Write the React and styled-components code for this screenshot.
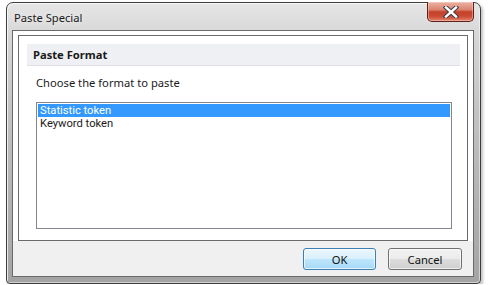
import React from "react";
import styled, { createGlobalStyle } from "styled-components";

const Global = createGlobalStyle`
  html, body { margin: 0; padding: 0; background: #ffffff; }
  body { font-family: "Noto Sans", "Open Sans", sans-serif; }
`;

const Window = styled.div`
  box-sizing: border-box;
  margin: 2px 0 0 6px;
  width: 475px;
  height: 282px;
  border: 1px solid #3d3d3d;
  border-radius: 7px 7px 4px 4px;
  background: linear-gradient(to bottom, #e6e6e6 0%, #d6d6d6 12%, #c2c2c2 40%, #b0b0b0 75%, #a4a4a4 100%);
  box-shadow: inset 1px 1px 0 rgba(255,255,255,0.75), inset -1px -1px 0 rgba(255,255,255,0.5), 2px 2px 3px rgba(0,0,0,0.25);
  padding: 0 6px 6px 5px;
  display: flex;
  flex-direction: column;
`;

const TitleBar = styled.div`
  height: 27px;
  display: flex;
  align-items: flex-start;
  flex-shrink: 0;
`;

const Title = styled.div`
  font-family: "Noto Sans", "Open Sans", sans-serif;
  font-size: 11.2px;
  color: #1a1a1a;
  margin: 7px 0 0 2px;
  text-shadow: 0 0 6px rgba(255,255,255,0.9);
`;

const CloseButton = styled.div`
  box-sizing: border-box;
  margin-left: auto;
  margin-top: -1px;
  width: 47px;
  height: 20px;
  border: 1px solid #5e2018;
  border-top: none;
  border-radius: 0 0 5px 5px;
  background: linear-gradient(to bottom, #eab3a3 0%, #dc8570 40%, #c4412a 52%, #cc4a32 75%, #e0846c 100%);
  box-shadow: inset 0 0 0 1px rgba(255,220,210,0.45);
  display: flex;
  align-items: center;
  justify-content: center;
`;

const Client = styled.div`
  flex: 1;
  box-sizing: border-box;
  border: 1px solid #6a6a6a;
  background: #f0f0f0;
  display: flex;
  flex-direction: column;
`;

const WhiteArea = styled.div`
  background: #ffffff;
  padding: 4px 5px 0 5px;
  height: 210px;
  box-sizing: border-box;
  display: flex;
`;

const Panel = styled.div`
  flex: 1;
  box-sizing: border-box;
  border: 1px solid #6a6a6a;
  padding: 8px 7px 0 8px;
  display: flex;
  flex-direction: column;
`;

const PanelHeader = styled.div`
  height: 21px;
  background: #eff0f4;
  border-bottom: 1px solid #dfe0e6;
  display: flex;
  align-items: center;
  padding-left: 6px;
  font-size: 11.2px;
  font-weight: 700;
  color: #1a1a1a;
`;

const Prompt = styled.div`
  font-size: 11.2px;
  color: #1a1a1a;
  margin: 9px 0 0 9px;
  line-height: 16px;
`;

const ListBox = styled.div`
  box-sizing: border-box;
  margin: 11px 0 0 9px;
  width: 416px;
  height: 127px;
  border: 1px solid #828790;
  padding: 1px;
  background: #ffffff;
`;

const ListItem = styled.div`
  height: 13px;
  line-height: 13px;
  font-family: Roboto, "Noto Sans", sans-serif;
  font-size: 11.2px;
  padding-left: 2px;
  overflow: hidden;
  color: ${(p) => (p.$selected ? "#ffffff" : "#1a1a1a")};
  background: ${(p) => (p.$selected ? "#3399ff" : "transparent")};
  white-space: nowrap;
`;

const ButtonBar = styled.div`
  flex: 1;
  display: flex;
  justify-content: flex-end;
  align-items: flex-start;
  gap: 12px;
  padding: 7px 11px 0 0;
`;

const Button = styled.div`
  box-sizing: border-box;
  width: ${(p) => p.$w}px;
  height: 22px;
  border-radius: 3px;
  border: 1px solid ${(p) => (p.$default ? "#3c7fb1" : "#707070")};
  background: ${(p) =>
    p.$default
      ? "linear-gradient(to bottom, #eaf6fd 0%, #d9f0fc 50%, #bee6fd 50%, #a7d9f5 100%)"
      : "linear-gradient(to bottom, #f2f2f2 0%, #ebebeb 50%, #dddddd 50%, #cfcfcf 100%)"};
  box-shadow: inset 0 0 0 1px rgba(255,255,255,0.65);
  display: flex;
  align-items: center;
  justify-content: center;
  font-size: 11.2px;
  color: #111;
`;

export default function App() {
  return (
    <>
      <Global />
      <Window>
        <TitleBar>
          <Title>Paste Special</Title>
          <CloseButton>
            <svg width="16" height="12" viewBox="0 0 16 12">
              <path d="M3 1.5 L13 10.5 M13 1.5 L3 10.5" stroke="#3a3a44" strokeWidth="4.4" strokeLinecap="square" />
              <path d="M3 1.5 L13 10.5 M13 1.5 L3 10.5" stroke="#ffffff" strokeWidth="2.4" strokeLinecap="square" />
            </svg>
          </CloseButton>
        </TitleBar>
        <Client>
          <WhiteArea>
            <Panel>
              <PanelHeader>Paste Format</PanelHeader>
              <Prompt>Choose the format to paste</Prompt>
              <ListBox>
                <ListItem $selected>Statistic token</ListItem>
                <ListItem>Keyword token</ListItem>
              </ListBox>
            </Panel>
          </WhiteArea>
          <ButtonBar>
            <Button $default $w={73}>OK</Button>
            <Button $w={74}>Cancel</Button>
          </ButtonBar>
        </Client>
      </Window>
    </>
  );
}
